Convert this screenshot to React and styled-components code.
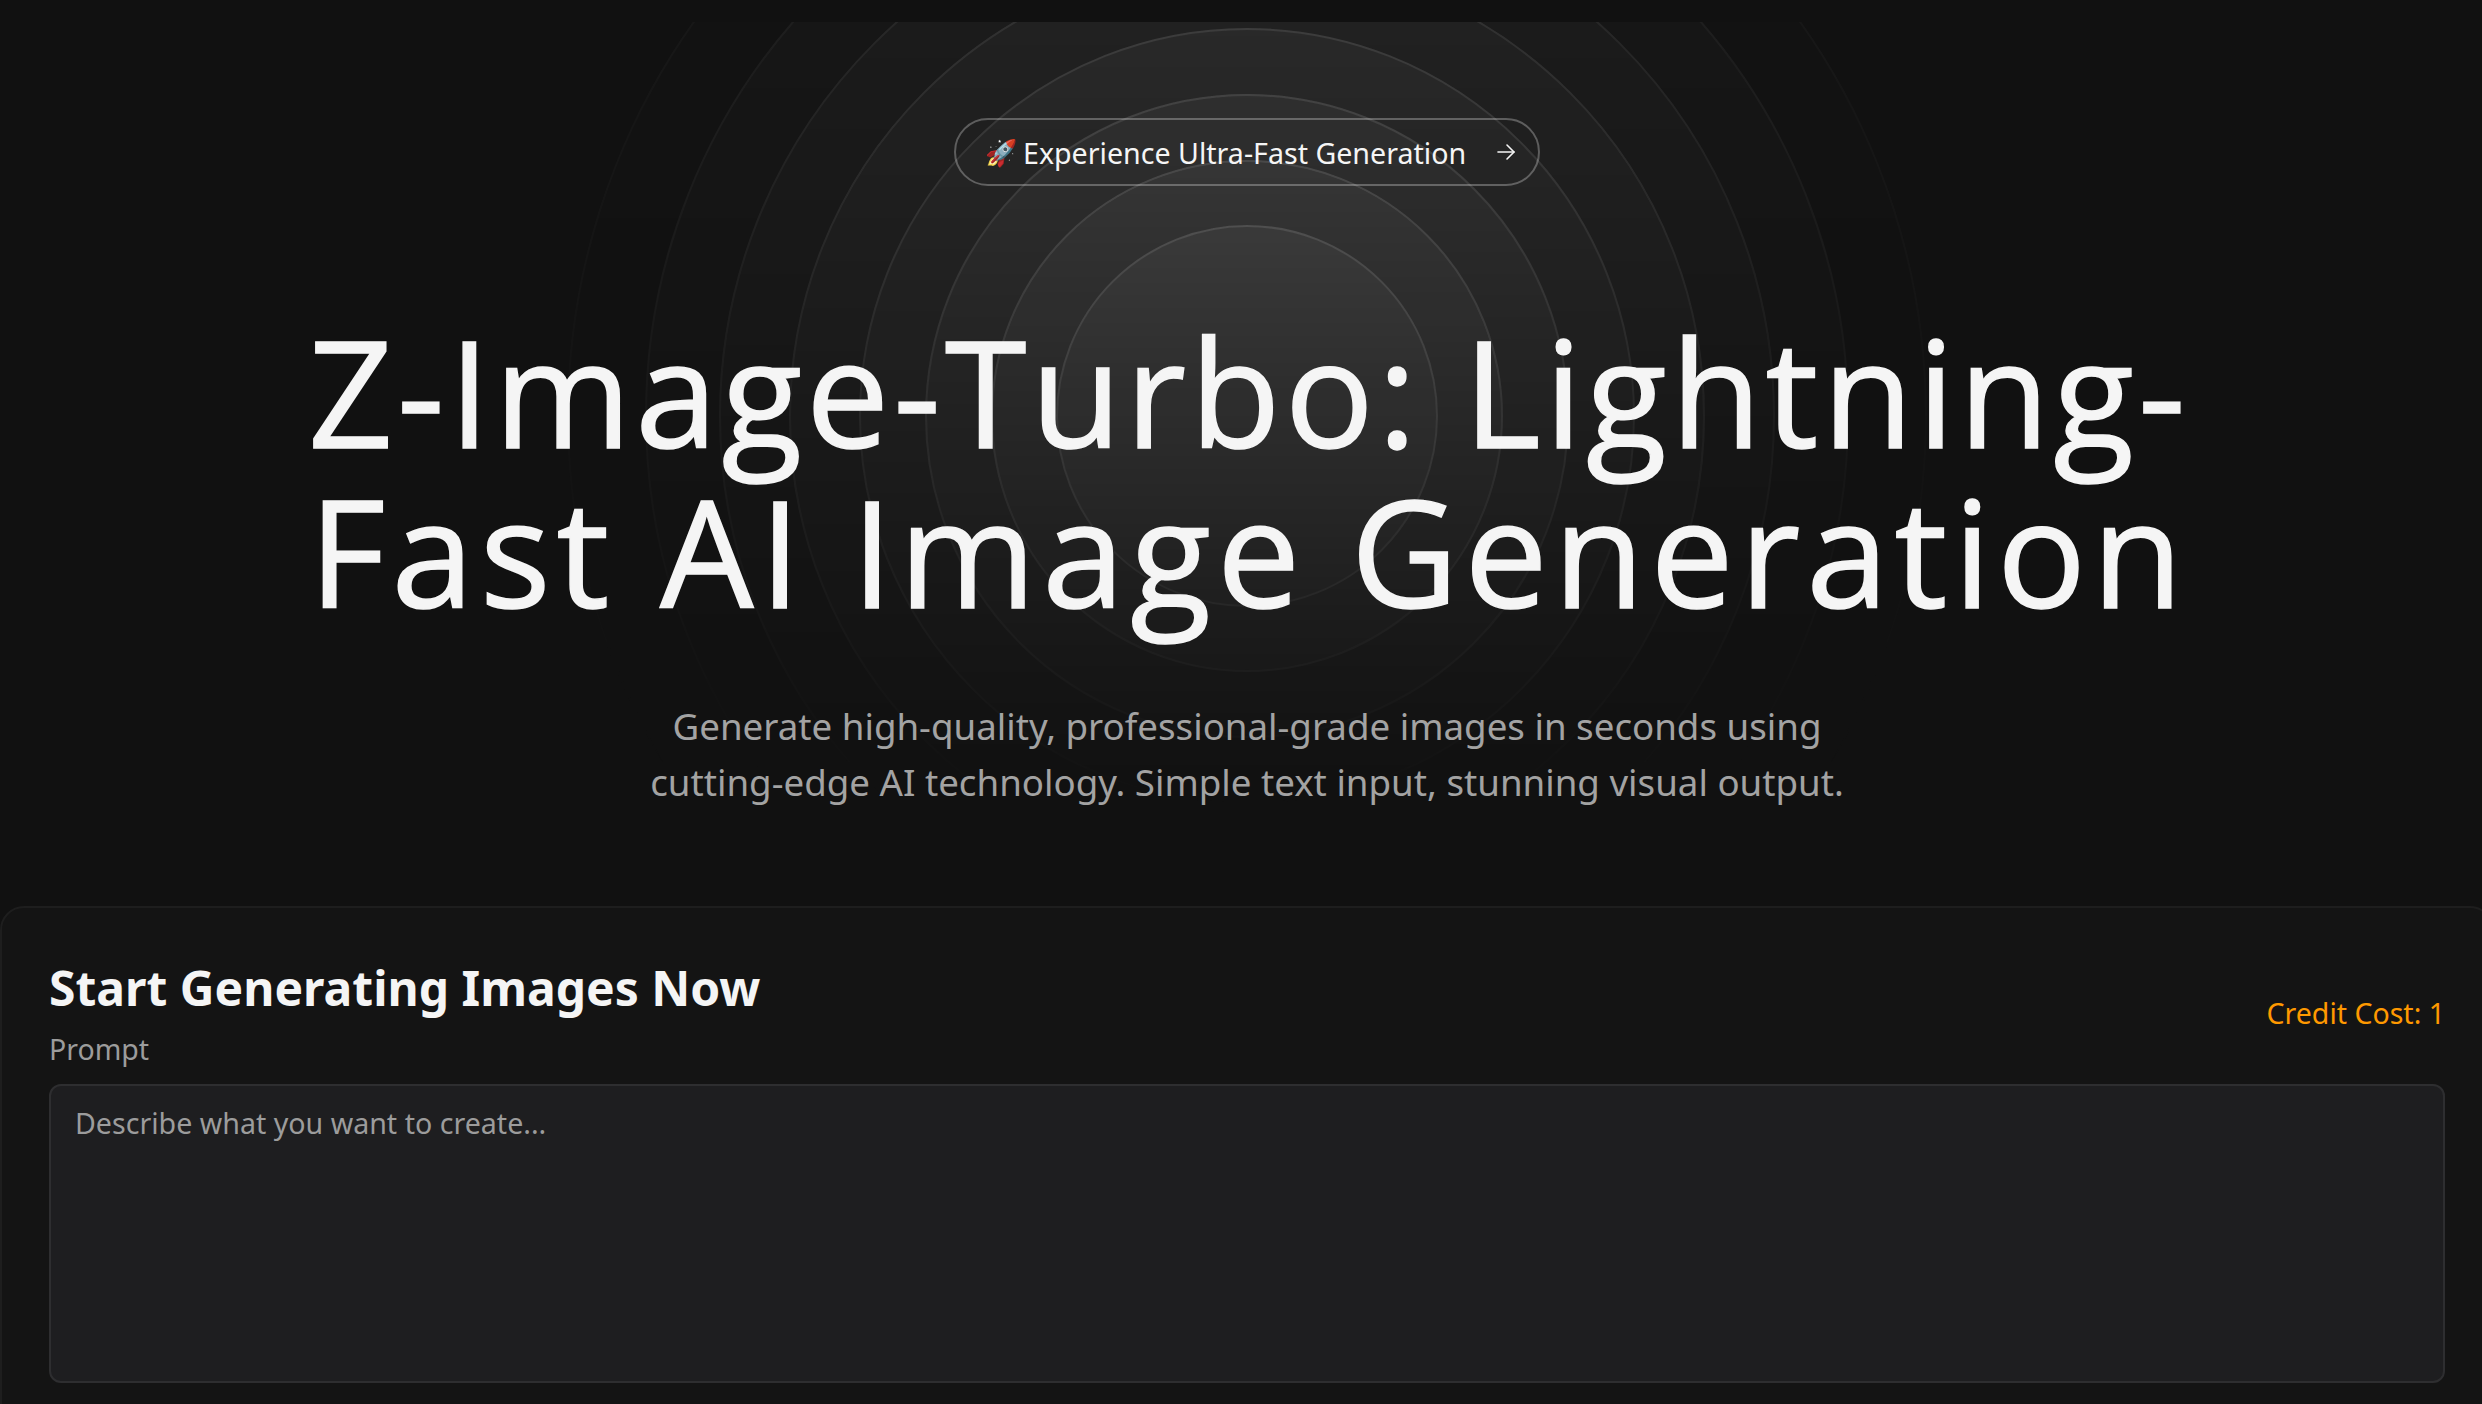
import React from "react";
import styled, { createGlobalStyle } from "styled-components";

const GlobalStyle = createGlobalStyle`
  html, body {
    margin: 0;
    background: #111111;
  }
  body {
    font-family: "Noto Sans", "Open Sans", sans-serif;
    overflow: hidden;
  }
`;

const Viewport = styled.div`
  width: 2482px;
  height: 1404px;
  overflow: hidden;
  background: #111111;
`;

const Page = styled.main`
  width: 2494px;
  padding-top: 22px;
  display: flex;
  flex-direction: column;
`;

const Hero = styled.section`
  position: relative;
  height: 884px;
  display: flex;
  flex-direction: column;
  align-items: center;
`;

const Ripple = styled.div`
  position: absolute;
  left: 0;
  right: 0;
  top: 0;
  height: 788px;
  overflow: hidden;
  -webkit-mask-image: linear-gradient(to bottom, white, transparent);
  mask-image: linear-gradient(to bottom, white, transparent);
`;

const Circle = styled.span`
  position: absolute;
  left: 50%;
  top: 50%;
  width: ${(p) => p.$radius * 2}px;
  height: ${(p) => p.$radius * 2}px;
  transform: translate(-50%, -50%);
  box-sizing: border-box;
  border-radius: 50%;
  border: 2px solid #d4d4d4;
  background: rgba(255, 255, 255, 0.25);
  opacity: ${(p) => p.$opacity};
`;

const Badge = styled.a`
  position: relative;
  margin-top: 96px;
  height: 68px;
  width: 586px;
  box-sizing: border-box;
  padding: 0 20px 0 29px;
  display: flex;
  align-items: center;
  border: 2px solid rgba(255, 255, 255, 0.28);
  border-radius: 34px;
  color: #f5f5f5;
  font-size: 28.6px;
  white-space: nowrap;
`;

const Rocket = styled.span`
  font-size: 26px;
  margin-right: 6px;
`;

const BadgeText = styled.span`
  flex: 1;
`;

const Title = styled.h1`
  position: relative;
  margin: 125px 0 0;
  padding-left: 4px;
  width: 2200px;
  text-align: center;
  font-family: "Open Sans", sans-serif;
  font-weight: 500;
  font-size: 148px;
  line-height: 160px;
  color: #f5f5f5;
  -webkit-text-stroke: 1.5px #f5f5f5;
`;

const TitleLine = styled.span`
  display: block;
  letter-spacing: ${(p) => p.$tracking}px;
`;

const Lead = styled.p`
  position: relative;
  margin: 67px 0 0;
  text-align: center;
  font-size: 36.7px;
  line-height: 56px;
  color: #a3a3a3;
`;

const Card = styled.section`
  box-sizing: border-box;
  height: 600px;
  padding: 48px 47px 0;
  background: #141414;
  border: 2px solid #1e1e1e;
  border-radius: 24px;
  display: flex;
  flex-direction: column;
`;

const CardHead = styled.div`
  display: flex;
  align-items: center;
  justify-content: space-between;
`;

const HeadText = styled.div`
  display: flex;
  flex-direction: column;
`;

const CardTitle = styled.h2`
  margin: 0;
  font-size: 48px;
  line-height: 64px;
  font-weight: 700;
  color: #f5f5f5;
`;

const Cost = styled.span`
  font-size: 28.5px;
  line-height: 40px;
  color: #ff9900;
`;

const Label = styled.label`
  margin-top: 9px;
  font-size: 28.5px;
  line-height: 40px;
  color: #9c9c9c;
`;

const Prompt = styled.textarea`
  margin-top: 15px;
  height: 299px;
  box-sizing: border-box;
  padding: 17px 24px;
  resize: none;
  background: #1e1e20;
  border: 2px solid #2e2e30;
  border-radius: 12px;
  font-family: "Noto Sans", sans-serif;
  font-size: 28.6px;
  line-height: 40px;
  color: #f5f5f5;
  &::placeholder {
    color: #9c9c9c;
    opacity: 1;
  }
`;

const radii = [191, 256, 322, 388, 458, 528, 602, 680];

export default function App() {
  return (
    <Viewport>
      <GlobalStyle />
      <Page>
        <Hero>
          <Ripple>
            {radii.map((r, i) => (
              <Circle key={r} $radius={r} $opacity={0.24 - i * 0.03} />
            ))}
          </Ripple>
          <Badge>
            <Rocket>🚀</Rocket>
            <BadgeText>Experience Ultra-Fast Generation</BadgeText>
            <svg width="24" height="24" viewBox="0 0 24 24" fill="none" stroke="#f5f5f5" strokeWidth="1.6" strokeLinecap="round" strokeLinejoin="round">
              <path d="M4 12h16" />
              <path d="M13 5l7 7-7 7" />
            </svg>
          </Badge>
          <Title>
            <TitleLine $tracking={4.1}>Z-Image-Turbo: Lightning-</TitleLine>
            <TitleLine $tracking={6.1}>Fast AI Image Generation</TitleLine>
          </Title>
          <Lead>
            Generate high-quality, professional-grade images in seconds using<br />
            cutting-edge AI technology. Simple text input, stunning visual output.
          </Lead>
        </Hero>
        <Card>
          <CardHead>
            <HeadText>
              <CardTitle>Start Generating Images Now</CardTitle>
              <Label>Prompt</Label>
            </HeadText>
            <Cost>Credit Cost: 1</Cost>
          </CardHead>
          <Prompt placeholder="Describe what you want to create..." />
        </Card>
      </Page>
    </Viewport>
  );
}
